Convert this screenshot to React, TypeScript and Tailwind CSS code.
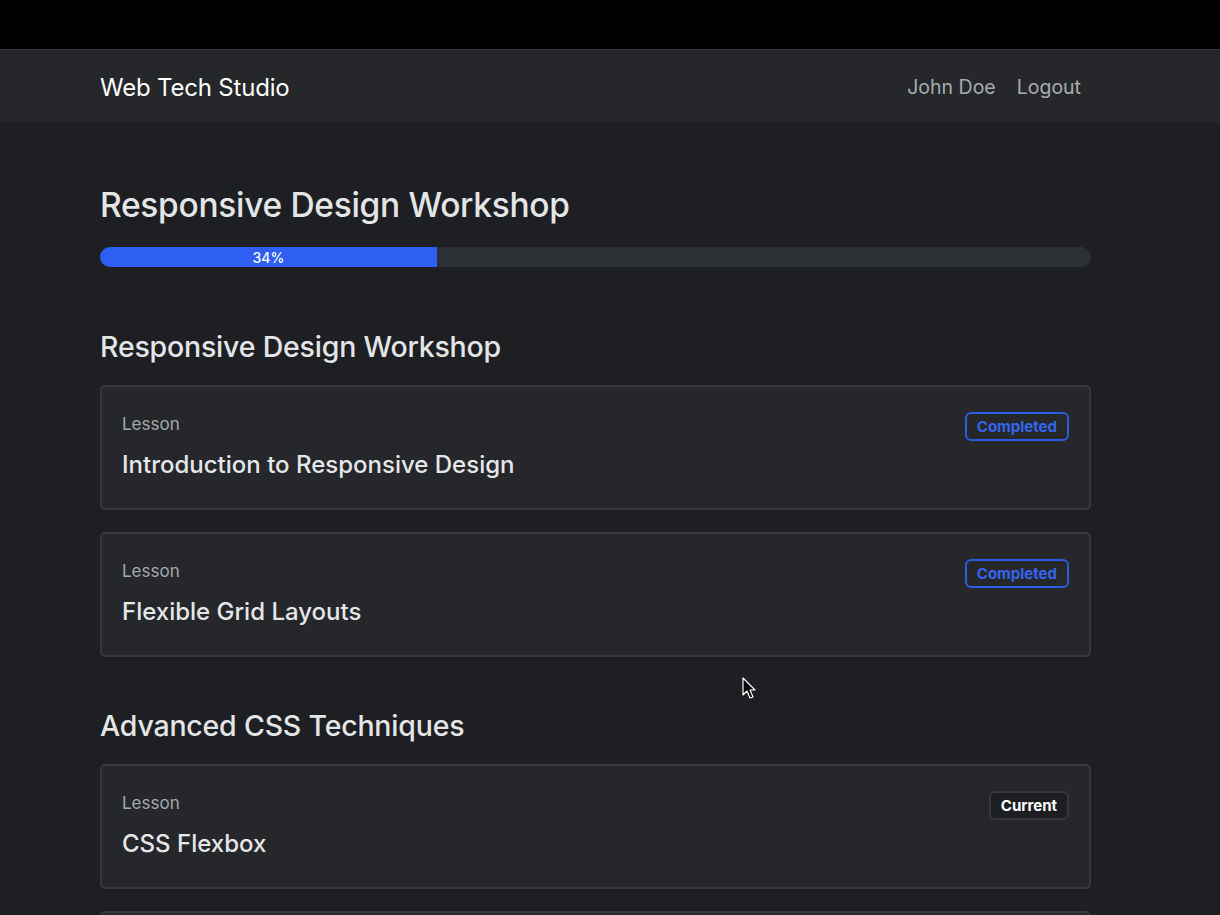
import React from 'react'

type Lesson = { title: string; status: 'completed' | 'current' | 'none' }

const sections: { title: string; lessons: Lesson[] }[] = [
  {
    title: 'Responsive Design Workshop',
    lessons: [
      { title: 'Introduction to Responsive Design', status: 'completed' },
      { title: 'Flexible Grid Layouts', status: 'completed' },
    ],
  },
  {
    title: 'Advanced CSS Techniques',
    lessons: [
      { title: 'CSS Flexbox', status: 'current' },
      // next lesson is below the fold, only its top edge shows
      { title: '', status: 'none' },
    ],
  },
]

const Badge = ({ status }: { status: Lesson['status'] }) => {
  if (status === 'completed')
    return (
      <span className="rounded-md border-2 border-[#2d5be3] px-[10px] py-[3px] text-[15px] leading-[19px] font-bold text-[#3565ee]">
        Completed
      </span>
    )
  if (status === 'current')
    return (
      <span className="rounded-md border-2 border-[#34373c] bg-[#1d1e22] px-[10px] py-[3px] text-[15px] leading-[19px] font-bold text-white">
        Current
      </span>
    )
  return null
}

export default function App() {
  return (
    <div className="relative h-[915px] overflow-hidden bg-[#1e1f23] font-['Inter',sans-serif] text-[#e4e5e7]">
      <div className="h-[50px] border-b border-[#34363a] bg-black" />
      <nav className="h-[72px] bg-[#25272b] pt-[3px]">
        <div className="mx-[100px] flex h-full w-[991px] items-center justify-between pr-[10px]">
          <span className="text-[24px] tracking-[-0.2px] text-white">Web Tech Studio</span>
          <div className="flex gap-[21px] text-[19.5px] text-[#a9abaf]">
            <span>John Doe</span>
            <span>Logout</span>
          </div>
        </div>
      </nav>

      <main className="mx-[100px] w-[991px] pt-[63px]">
        <h1 className="text-[33.5px] leading-[40px] font-medium tracking-[-0.3px]">Responsive Design Workshop</h1>
        <div className="mt-[22px] h-[20px] w-full overflow-hidden rounded-full bg-[#2c2f33]">
          <div className="flex h-full w-[34%] items-center justify-center bg-[#2e5ef2] text-[14px] font-medium text-white">
            34%
          </div>
        </div>

        {sections.map((section, i) => (
          <section key={section.title} className={i === 0 ? 'mt-[62px]' : 'mt-[51px]'}>
            <h2 className="text-[28.5px] leading-[36px] font-medium tracking-[-0.2px]">{section.title}</h2>
            <div className="mt-[20px] flex flex-col gap-[22px]">
              {section.lessons.map((lesson, j) => (
                <div
                  key={j}
                  className="flex h-[125px] shrink-0 items-start justify-between rounded-[5px] border-2 border-[#35383d] bg-[#25272b] px-[20px] pt-[25px]"
                >
                  {lesson.title && (
                    <div>
                      <div className="text-[17px] leading-[24px] text-[#a6a8ac]">Lesson</div>
                      <div className="mt-[14px] text-[24px] leading-[30px] font-medium text-[#e6e7e9]">{lesson.title}</div>
                    </div>
                  )}
                  <Badge status={lesson.status} />
                </div>
              ))}
            </div>
          </section>
        ))}
      </main>

      <svg className="absolute left-[742px] top-[677px]" width="16" height="24" viewBox="0 0 16 24">
        <path d="M1 1 L1 18 L5 14 L8 21 L11 20 L8 13 L13 13 Z" fill="black" stroke="white" strokeWidth="1.2" strokeLinejoin="round" />
      </svg>
    </div>
  )
}
